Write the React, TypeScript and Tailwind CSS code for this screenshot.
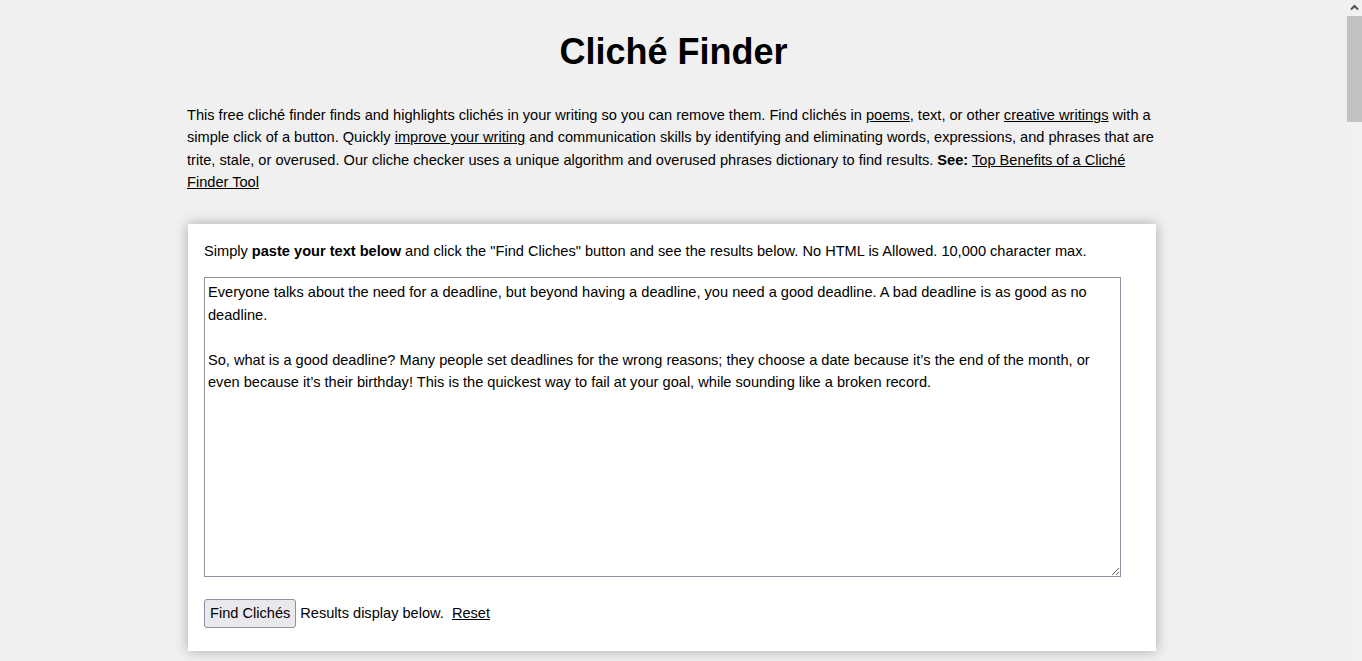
import React, { useState } from "react";

const sample = `Everyone talks about the need for a deadline, but beyond having a deadline, you need a good deadline. A bad deadline is as good as no deadline.

So, what is a good deadline? Many people set deadlines for the wrong reasons; they choose a date because it’s the end of the month, or even because it’s their birthday! This is the quickest way to fail at your goal, while sounding like a broken record.`;

// fake browser scrollbar, the page in the shot is scrolled to the top
function Scrollbar() {
  return (
    <div className="fixed top-0 right-0 w-[15px] h-screen bg-[#f1f1f1] flex flex-col items-center">
      <svg width="15" height="15" viewBox="0 0 15 15" className="shrink-0">
        <path d="M4 9.5 L7.5 6 L11 9.5" fill="none" stroke="#505050" strokeWidth="2" />
      </svg>
      <div className="mt-[1px] w-[15px] h-[106px] bg-[#c1c1c1]" />
    </div>
  );
}

export default function App() {
  const [text, setText] = useState(sample);

  return (
    <div className="min-h-screen bg-[#f0f0f0] text-black font-['Liberation_Sans',Arial,sans-serif] pr-[15px] pb-16">
      <div className="w-[973px] mx-auto">
        <h1 className="text-[36px] leading-[41px] font-bold text-center pt-[31px]">Cliché Finder</h1>

        <p className="text-[14.6px] leading-[22.4px] mt-[32px] pr-[3px]">
          This free cliché finder finds and highlights clichés in your writing so you can remove them. Find clichés in{" "}
          <a href="#" className="underline">poems</a>, text, or other{" "}
          <a href="#" className="underline">creative writings</a> with a simple click of a button. Quickly{" "}
          <a href="#" className="underline">improve your writing</a> and communication skills by identifying and
          eliminating words, expressions, and phrases that are trite, stale, or overused. Our cliche checker uses a
          unique algorithm and overused phrases dictionary to find results. <b>See:</b>{" "}
          <a href="#" className="underline">Top Benefits of a Cliché Finder Tool</a>
        </p>

        <div className="bg-white mt-[30px] mr-[4px] ml-[1px] px-4 pt-[16px] pb-[23px] shadow-[0_0_12px_rgba(0,0,0,0.3)]">
          <p className="text-[14.6px] leading-[22.4px]">
            Simply <b>paste your text below</b> and click the "Find Cliches" button and see the results below. No HTML
            is Allowed. 10,000 character max.
          </p>
          <textarea
            value={text}
            onChange={(e) => setText(e.target.value)}
            className="block mt-[15px] w-[917px] h-[300px] border border-[#8f8f9d] px-[3px] py-[3px] text-[14.6px] leading-[22.6px] font-['Liberation_Sans',Arial,sans-serif] outline-none"
          />
          <div className="mt-[22px] flex items-center text-[14.6px]">
            <button className="h-[29px] px-[5px] bg-[#e9e9ed] border border-[#8f8f9d] rounded-[3px] text-[14.6px]">
              Find Clichés
            </button>
            <span className="ml-[4px]">Results display below.</span>
            <a href="#" className="underline ml-[8px]">Reset</a>
          </div>
        </div>
      </div>
      <Scrollbar />
    </div>
  );
}
